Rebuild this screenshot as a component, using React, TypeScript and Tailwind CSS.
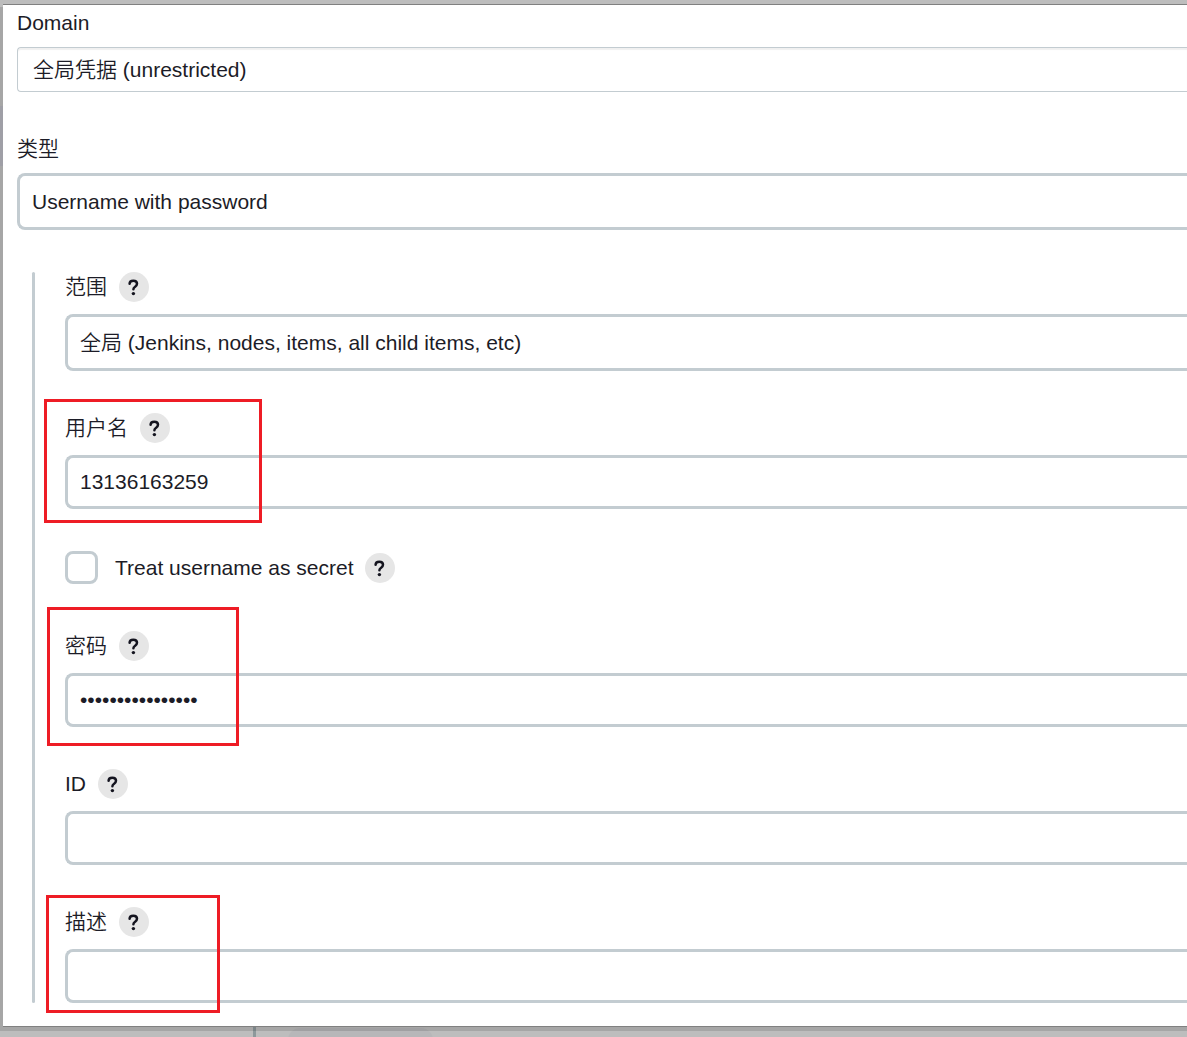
import { useId, type ReactNode } from "react";

const boxClass =
  "block w-full appearance-none rounded-l-lg border-3 border-r-0 border-[#c3ccd1] bg-white pl-3 text-[21px] text-[#1c1c27] outline-none";

function HelpButton({ topic }: { topic: string }) {
  return (
    <button
      type="button"
      aria-label={`Help for feature: ${topic}`}
      className="flex size-[30px] shrink-0 items-center justify-center rounded-full bg-[#e6e6e6]"
    >
      <svg viewBox="0 0 30 30" className="size-[30px]" fill="none" aria-hidden="true">
        <path
          d="M10.6 11.8C10.6 9.9 12.2 8.8 14.3 8.8C16.5 8.8 18 10 18 11.8C18 13.2 17.2 13.9 16.1 14.7C15 15.4 14.4 16 14.4 17.3"
          stroke="#14141f"
          strokeWidth="2.5"
          strokeLinecap="round"
          strokeLinejoin="round"
        />
        <circle cx="14.4" cy="21.6" r="1.7" fill="#14141f" />
      </svg>
    </button>
  );
}

type FieldProps = {
  label: string;
  highlight?: ReactNode;
  children: (id: string) => ReactNode;
};

function Field({ label, highlight, children }: FieldProps) {
  const id = useId();
  return (
    <div className="relative">
      <div className="mb-3 flex items-center gap-3">
        <label htmlFor={id} className="leading-[30px]">
          {label}
        </label>
        <HelpButton topic={label} />
      </div>
      {children(id)}
      {highlight}
    </div>
  );
}

export default function App() {
  return (
    <div className="min-h-screen overflow-hidden bg-[#bdbdbd] pt-1 font-['Liberation_Sans','Noto_Sans_CJK_SC',sans-serif] text-[21px] font-[350] text-[#1c1c27]">
      <div className="relative bg-[#a6a6a6] pl-[3px]">
        <div className="absolute top-0 left-0 h-[3px] w-[3px] bg-[#bdbdbd]" />
        <div className="absolute top-[102px] left-0 h-[60px] w-[3px] bg-[#9f9fa6]" />
        <main className="border-y border-[#808080] bg-white pt-[3px] pb-[23px] pl-[14px]">
          <label htmlFor="domain" className="block leading-[30px]">
            Domain
          </label>
          <select
            id="domain"
            className="mt-[9px] block h-[45px] w-full appearance-none rounded-l-[4px] border border-r-0 border-[#c3ccd1] bg-white pl-[15px] shadow-[inset_0_2px_1px_rgba(0,0,0,0.06)] outline-none"
          >
            <option>全局凭据 (unrestricted)</option>
          </select>

          <label htmlFor="kind" className="mt-[42px] block leading-[30px]">
            类型
          </label>
          <select id="kind" className={`${boxClass} mt-[9px] h-[57px]`}>
            <option>Username with password</option>
          </select>

          <section className="relative mt-[42px] ml-[15px] flex flex-col gap-[42px] pl-[33px]">
            <div className="absolute inset-y-0 left-0 w-[3px] rounded-full bg-[#c3ccd1]" />

            <Field label="范围">
              {(id) => (
                <select id={id} className={`${boxClass} h-[57px]`}>
                  <option>全局 (Jenkins, nodes, items, all child items, etc)</option>
                </select>
              )}
            </Field>

            <Field
              label="用户名"
              highlight={
                <div className="pointer-events-none absolute -top-3.5 -left-[21px] h-[124px] w-[218px] border-3 border-[#ee1c25]" />
              }
            >
              {(id) => <input id={id} type="text" defaultValue="13136163259" className={`${boxClass} h-[54px]`} />}
            </Field>

            <div className="mb-[5px] flex items-center">
              <input
                id="secret"
                type="checkbox"
                className="size-[33px] shrink-0 appearance-none rounded-lg border-3 border-[#c3ccd1] bg-white"
              />
              <label htmlFor="secret" className="mr-[11px] ml-[17px] leading-[30px]">
                Treat username as secret
              </label>
              <HelpButton topic="Treat username as secret" />
            </div>

            <Field
              label="密码"
              highlight={
                <div className="pointer-events-none absolute -top-6 -left-[18px] h-[139px] w-[192px] border-3 border-[#ee1c25]" />
              }
            >
              {(id) => (
                <input id={id} type="password" defaultValue="abcdefghijklmnop" className={`${boxClass} h-[54px]`} />
              )}
            </Field>

            <Field label="ID">{(id) => <input id={id} type="text" className={`${boxClass} h-[54px]`} />}</Field>

            <Field
              label="描述"
              highlight={
                <div className="pointer-events-none absolute -top-3 -left-[19px] h-[118px] w-[174px] border-3 border-[#ee1c25]" />
              }
            >
              {(id) => <input id={id} type="text" className={`${boxClass} h-[54px]`} />}
            </Field>
          </section>
        </main>
      </div>
      <div className="relative flex h-2.5 overflow-hidden pl-[253px]">
        <div className="w-[3px] bg-[#8d989b]" />
        <div className="mt-px ml-8 h-10 w-[145px] rounded-t-xl bg-[#b7b7b9]" />
        <div className="absolute inset-x-0 top-0 h-1 bg-black/12" />
      </div>
    </div>
  );
}
